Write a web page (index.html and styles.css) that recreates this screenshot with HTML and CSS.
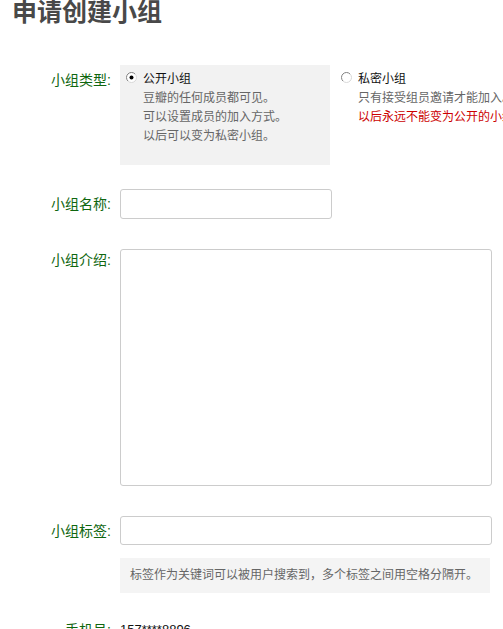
FILE: index.html
```html
<!DOCTYPE html>
<html lang="zh-CN">
<head>
<meta charset="utf-8">
<title>申请创建小组</title>
<link rel="stylesheet" href="styles.css">
</head>
<body>
<h1 class="title">申请创建小组</h1>
<div class="form">
  <div class="row row-type">
    <div class="label">小组类型:</div>
    <div class="options">
      <div class="opt opt-public">
        <svg class="radio" width="11" height="11" viewBox="0 0 11 11"><circle cx="5.5" cy="5.5" r="5" fill="#fff"/><path d="M1.96 9.04A5 5 0 0 1 9.04 1.96" fill="none" stroke="#808080" stroke-width="1"/><path d="M9.04 1.96A5 5 0 0 1 1.96 9.04" fill="none" stroke="#d8d8d8" stroke-width="1"/><circle cx="5.5" cy="5.5" r="2" fill="#000"/></svg>
        <div class="opt-text">
          <div class="opt-name">公开小组</div>
          <div class="opt-desc">豆瓣的任何成员都可见。</div>
          <div class="opt-desc">可以设置成员的加入方式。</div>
          <div class="opt-desc">以后可以变为私密小组。</div>
        </div>
      </div>
      <div class="opt opt-private">
        <svg class="radio" width="11" height="11" viewBox="0 0 11 11"><circle cx="5.5" cy="5.5" r="5" fill="#fff"/><path d="M1.96 9.04A5 5 0 0 1 9.04 1.96" fill="none" stroke="#808080" stroke-width="1"/><path d="M9.04 1.96A5 5 0 0 1 1.96 9.04" fill="none" stroke="#d8d8d8" stroke-width="1"/></svg>
        <div class="opt-text">
          <div class="opt-name">私密小组</div>
          <div class="opt-desc">只有接受组员邀请才能加入。</div>
          <div class="opt-warn">以后永远不能变为公开的小组。</div>
        </div>
      </div>
    </div>
  </div>

  <div class="row row-name">
    <div class="label">小组名称:</div>
    <input class="field field-short" type="text">
  </div>

  <div class="row row-intro">
    <div class="label label-top">小组介绍:</div>
    <textarea class="area"></textarea>
  </div>

  <div class="row row-tags">
    <div class="label">小组标签:</div>
    <input class="field field-long" type="text">
  </div>

  <div class="row row-hint">
    <div class="label"></div>
    <div class="hint">标签作为关键词可以被用户搜索到，多个标签之间用空格分隔开。</div>
  </div>

  <div class="row row-phone">
    <div class="label">手机号:</div>
    <div class="value">157****8896</div>
  </div>
</div>
</body>
</html>
```
FILE: styles.css
```css
html, body {
  overflow: hidden;
}
body {
  margin: 0;
  padding: 0 0 0 12px;
  background: #fff;
  font-family: "Liberation Sans", "Noto Sans CJK SC", sans-serif;
  font-size: 12px;
  color: #111;
}
.title {
  margin: 0 0 40px;
  font-size: 25px;
  line-height: 25px;
  font-weight: bold;
  color: #494949;
  white-space: nowrap;
}
.row {
  display: flex;
  align-items: flex-start;
}
.label {
  flex: none;
  width: 108px;
  box-sizing: border-box;
  padding: 6px 9px 0 0;
  text-align: right;
  font-size: 14px;
  line-height: 18px;
  color: #0f660f;
  white-space: nowrap;
}
.label-top {
  padding-top: 2px;
}
.options {
  display: flex;
  gap: 5px;
  white-space: nowrap;
}
.opt {
  display: flex;
  align-items: flex-start;
  box-sizing: border-box;
  padding: 5px 6px 19px;
  line-height: 19px;
}
.opt-public {
  width: 210px;
  background: #f2f2f2;
}
.radio {
  flex: none;
  margin-top: 2px;
  margin-right: 6px;
}
.opt-name {
  color: #111;
}
.opt-desc {
  color: #666;
}
.opt-warn {
  color: #c00;
}
.row-name {
  margin-top: 24px;
}
.field {
  box-sizing: border-box;
  margin: 0;
  border: 1px solid #ccc;
  border-radius: 3px;
  background: #fff;
  padding: 0 5px;
  font: inherit;
}
.field-short {
  width: 212px;
  height: 30px;
}
.field-long {
  width: 372px;
  height: 29px;
}
.row-intro {
  margin-top: 30px;
}
.area {
  box-sizing: border-box;
  margin: 0;
  width: 372px;
  height: 237px;
  border: 1px solid #ccc;
  border-radius: 3px;
  resize: none;
  font: inherit;
}
.row-tags {
  margin-top: 30px;
}
.row-hint {
  margin-top: 13px;
}
.hint {
  width: 370px;
  height: 35px;
  box-sizing: border-box;
  padding: 0 10px;
  line-height: 35px;
  background: #f4f4f4;
  color: #666;
  white-space: nowrap;
}
.row-phone {
  margin-top: 22px;
}
.value {
  padding-top: 6px;
  font-size: 13px;
  line-height: 18px;
  color: #111;
}
```
